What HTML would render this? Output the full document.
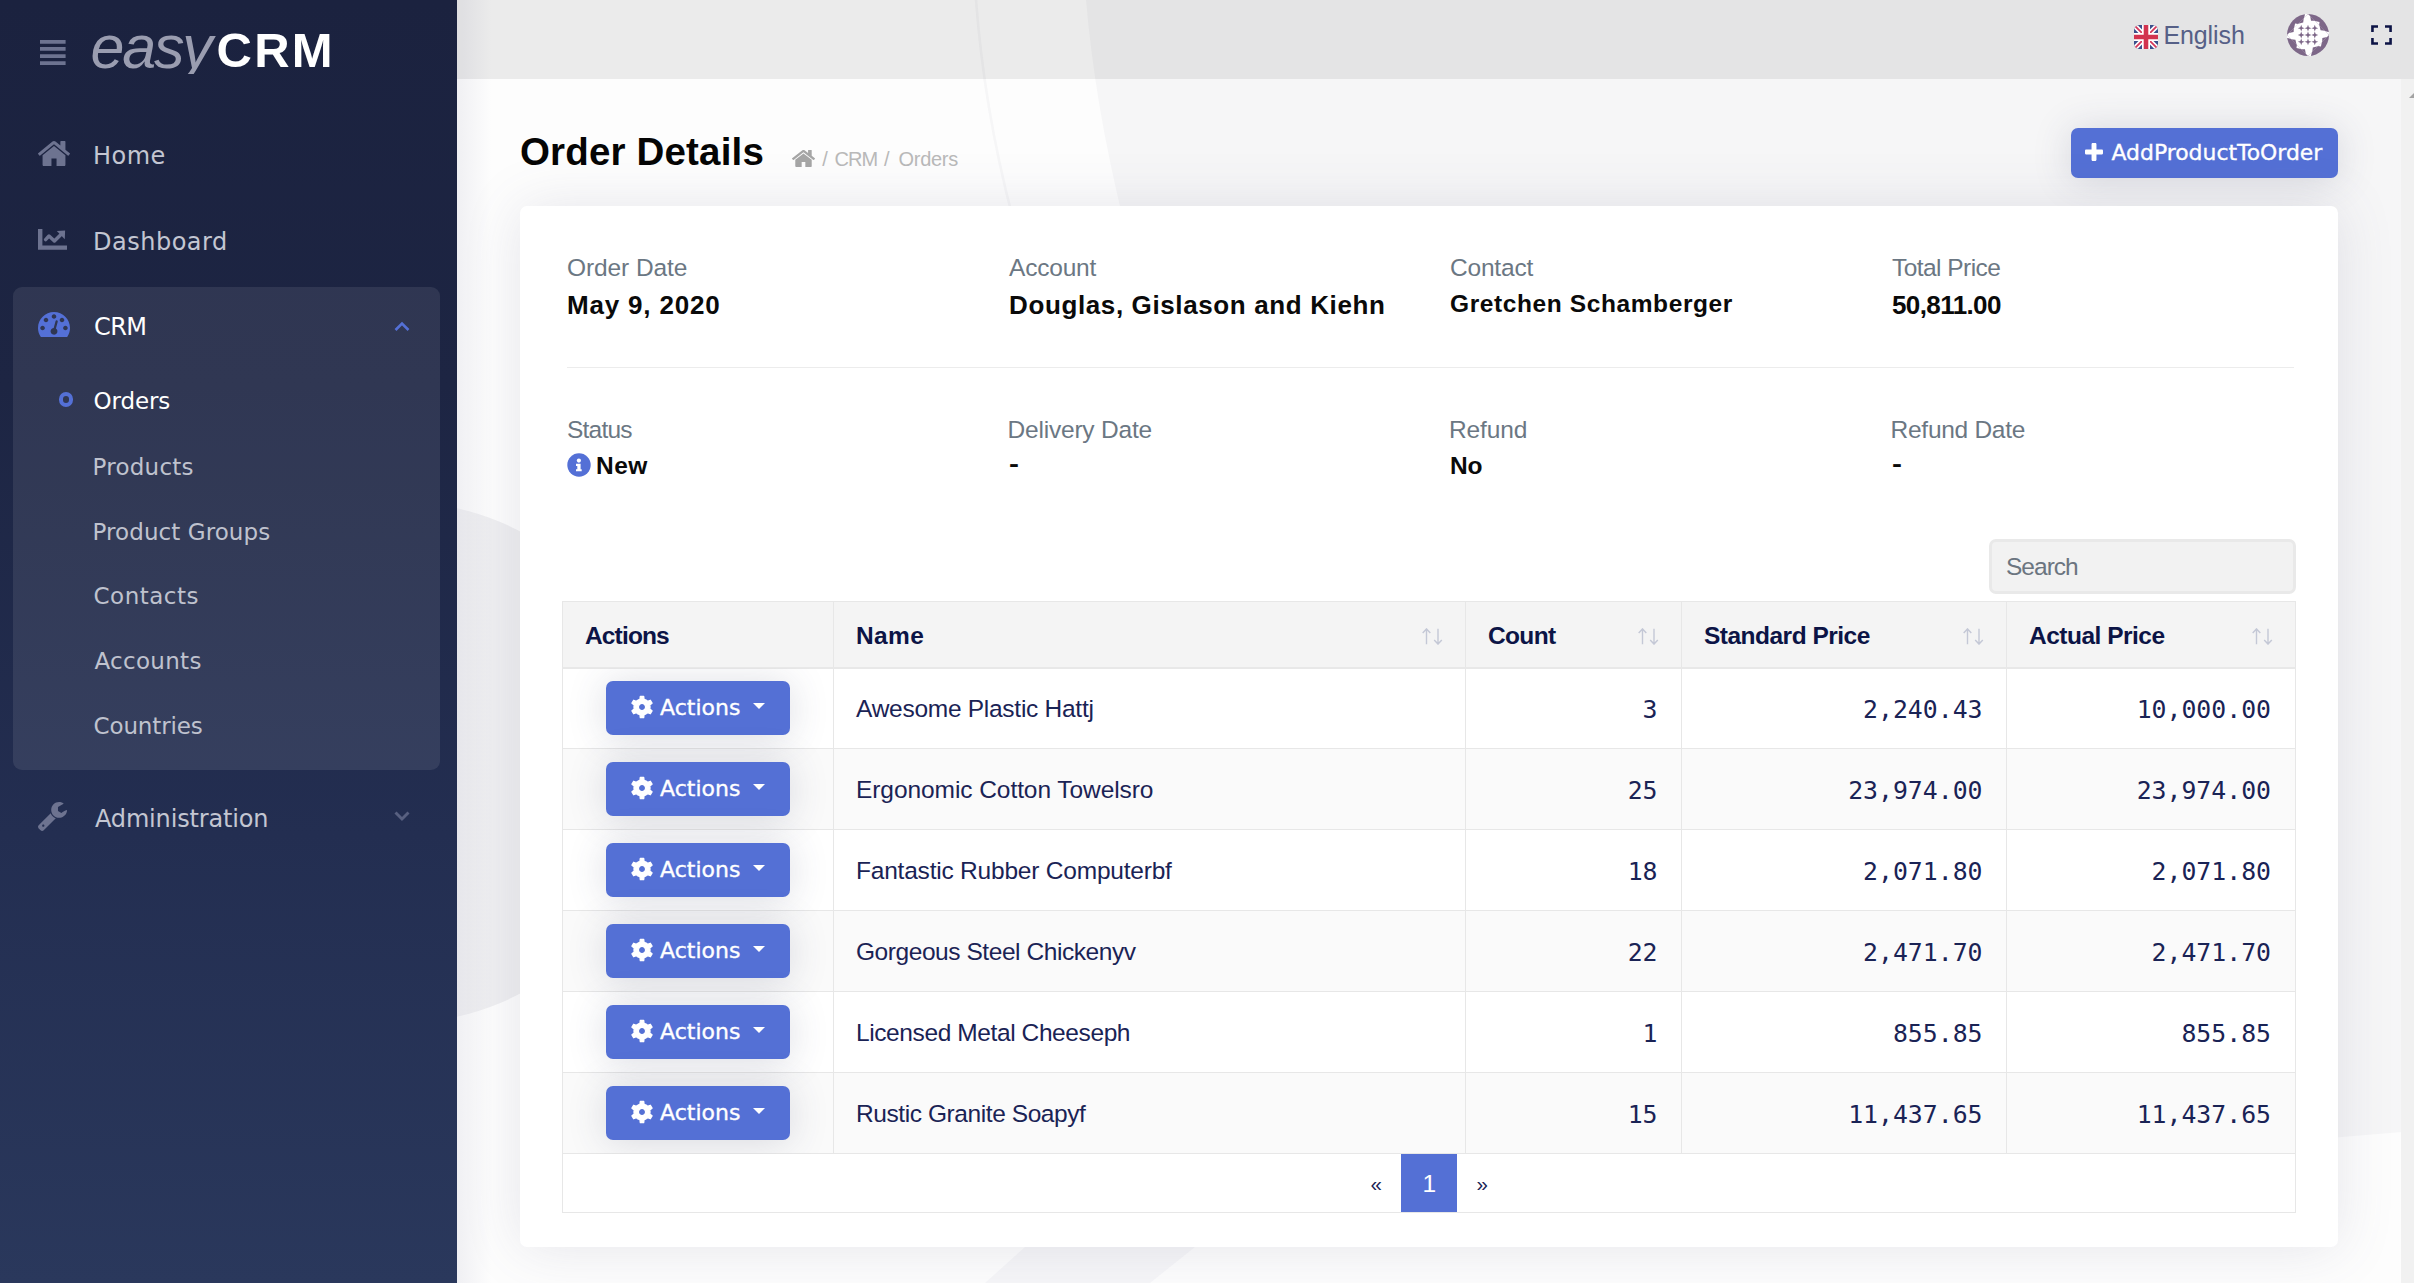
<!DOCTYPE html>
<html lang="en">
<head>
<meta charset="utf-8">
<title>Order Details - easyCRM</title>
<style>
*{box-sizing:border-box;margin:0;padding:0}
html,body{width:2414px;height:1283px;overflow:hidden}
body{position:relative;background:#f7f7f8;font-family:"Liberation Sans","DejaVu Sans",sans-serif;color:#000}
.abs{position:absolute;white-space:nowrap}
/* ---------- background ---------- */
#bg{position:absolute;left:457px;top:0;width:1957px;height:1283px;overflow:hidden;background:#fdfdfd}
#bg svg{position:absolute;left:0;top:0}
#bg .edge{position:absolute;left:0;top:0;width:34px;height:1283px;background:linear-gradient(90deg,rgba(214,214,224,.34),rgba(230,230,238,0))}
/* ---------- sidebar ---------- */
#side{position:absolute;left:0;top:0;width:457px;height:1283px;background:linear-gradient(180deg,#1b223f 0,#1d2543 30%,#232e51 65%,#2a385c 100%);color:#c6c8d3}
#side .t{position:absolute;white-space:nowrap;font-family:"DejaVu Sans","Liberation Sans",sans-serif;font-size:24px;line-height:30px;color:#c3c6d2}
#side .sub{color:#bfc2ce;font-size:23px}
#crmbox{position:absolute;left:13px;top:287px;width:427px;height:483px;border-radius:9px;background:rgba(255,255,255,.085)}
/* ---------- topbar ---------- */
#top{position:absolute;left:457px;top:0;width:1957px;height:79px;background:rgba(0,0,0,.071)}
#scroll{position:absolute;left:2401px;top:79px;width:13px;height:1204px;background:#f1f1f1;overflow:hidden}
/* ---------- page ---------- */
#card{position:absolute;left:520px;top:206px;width:1818px;height:1041px;background:#fff;border-radius:7px;box-shadow:0 1px 56px rgba(90,90,125,.145)}
.lbl{position:absolute;white-space:nowrap;font-size:24.5px;line-height:30px;color:#6b7783}
.val{position:absolute;white-space:nowrap;font-size:26px;line-height:32px;font-weight:bold;color:#0a0a0a}
.btn{position:absolute;background:#5470d5;color:#fff;border-radius:7px;box-shadow:0 2px 38px rgba(60,65,100,.18)}
/* ---------- table ---------- */
#tbl{position:absolute;left:562px;top:601px;width:1732.5px;border-collapse:collapse;table-layout:fixed;font-size:24.5px;color:#1a2355}
#tbl th,#tbl td{border:1.5px solid #e7e7e7;padding:0 22px;height:81px;vertical-align:middle;position:relative;white-space:nowrap}
#tbl th{height:66px;padding-top:3.4px;background:#f4f4f4;text-align:left;font-weight:bold;color:#0c1446;border-bottom:2.5px solid #e8e8e8}
#tbl tr.even td{background:#fafafa}
#tbl td.nm{padding-top:1.6px}
#tbl td.num{text-align:right;padding-right:23.5px;padding-top:2px;font-family:"DejaVu Sans Mono","Liberation Mono",monospace;font-size:24.8px}
#tbl td.pg{height:58.5px;text-align:center}
#acts{position:absolute;left:0;top:0;width:2414px;height:1283px;clip-path:inset(668.5px 1400px 129.6px 563px)}
.bc{font-size:20px;line-height:28px;color:#b9b9b9}
.ab{font-family:"DejaVu Sans","Liberation Sans",sans-serif;font-size:22px;line-height:30px;color:#fff;-webkit-text-stroke:.35px #fff}
.sort{position:absolute;right:22px;top:25.500px}
</style>
</head>
<body>
<div id="bg"><svg width="1957" height="1283" viewBox="457 0 1957 1283"><path fill="#f6f6f7" d="M1086 0C1092 70 1104 140 1122 215L2330 215L2330 1138L2414 1131L2414 0z"/><path fill="#f9f9fa" d="M2330 1138L2414 1131V1283H2330z" opacity="0"/><circle cx="400" cy="762.5" r="260.5" fill="#efeff1"/><path fill="none" stroke="#ececee" stroke-width="2.500" opacity=".4" d="M976 0C982 80 995 150 1012 215"/><path fill="#f6f6f8" d="M985 1283L1025 1247H1195L1150 1283z"/></svg><div class="edge"></div></div>
<header id="top">
<svg class="abs" style="left:1677px;top:25px" width="24" height="24" viewBox="0 0 24 24"><defs><clipPath id="fc"><rect x="0" y="0" width="24" height="24" rx="5.5"/></clipPath></defs><g clip-path="url(#fc)"><rect width="24" height="24" fill="#3b4f8c"/><path d="M0 0L24 24M24 0L0 24" stroke="#fff" stroke-width="5"/><path d="M0 0L24 24M24 0L0 24" stroke="#d6385a" stroke-width="1.8"/><path d="M12 0V24M0 12H24" stroke="#fff" stroke-width="8"/><path d="M12 0V24M0 12H24" stroke="#d2334f" stroke-width="4.6"/></g></svg>
<div class="abs" id="t_eng" style="left:1706.4px;top:19px;font-size:25px;line-height:32px;color:#566087;letter-spacing:-0.1px">English</div>
<svg class="abs" style="left:1829px;top:13px" width="44" height="44" viewBox="-22 -22 44 44"><circle r="21" fill="#7d6788"/><g transform="rotate(45)"><path fill="#fff" d="M-14.850-14.850H14.850V14.850H-14.850z"/><g transform="rotate(0)"><path fill="#7d6788" d="M-12-15L-5-15-8-12.300zM1-15L9-15 5.500-12.300z"/><path fill="#fff" d="M-5-14.700L1-14.700-1-17.300zM9-14.700L14.500-14.700 13-17z"/></g><g transform="rotate(90)"><path fill="#7d6788" d="M-12-15L-5-15-8-12.300zM1-15L9-15 5.500-12.300z"/><path fill="#fff" d="M-5-14.700L1-14.700-1-17.300zM9-14.700L14.500-14.700 13-17z"/></g><g transform="rotate(180)"><path fill="#7d6788" d="M-12-15L-5-15-8-12.300zM1-15L9-15 5.500-12.300z"/><path fill="#fff" d="M-5-14.700L1-14.700-1-17.300zM9-14.700L14.500-14.700 13-17z"/></g><g transform="rotate(270)"><path fill="#7d6788" d="M-12-15L-5-15-8-12.300zM1-15L9-15 5.500-12.300z"/><path fill="#fff" d="M-5-14.700L1-14.700-1-17.300zM9-14.700L14.500-14.700 13-17z"/></g></g><path fill="#7d6788" d="M-6.80 -10.20L-5.92 -7.68L-3.40 -6.80L-5.92 -5.92L-6.80 -3.40L-7.68 -5.92L-10.20 -6.80L-7.68 -7.68zM-6.80 -3.40L-5.92 -0.88L-3.40 0.00L-5.92 0.88L-6.80 3.40L-7.68 0.88L-10.20 0.00L-7.68 -0.88zM-6.80 3.40L-5.92 5.92L-3.40 6.80L-5.92 7.68L-6.80 10.20L-7.68 7.68L-10.20 6.80L-7.68 5.92zM0.00 -10.20L0.88 -7.68L3.40 -6.80L0.88 -5.92L0.00 -3.40L-0.88 -5.92L-3.40 -6.80L-0.88 -7.68zM0.00 -3.40L0.88 -0.88L3.40 0.00L0.88 0.88L0.00 3.40L-0.88 0.88L-3.40 0.00L-0.88 -0.88zM0.00 3.40L0.88 5.92L3.40 6.80L0.88 7.68L0.00 10.20L-0.88 7.68L-3.40 6.80L-0.88 5.92zM6.80 -10.20L7.68 -7.68L10.20 -6.80L7.68 -5.92L6.80 -3.40L5.92 -5.92L3.40 -6.80L5.92 -7.68zM6.80 -3.40L7.68 -0.88L10.20 0.00L7.68 0.88L6.80 3.40L5.92 0.88L3.40 0.00L5.92 -0.88zM6.80 3.40L7.68 5.92L10.20 6.80L7.68 7.68L6.80 10.20L5.92 7.68L3.40 6.80L5.92 5.92z"/></svg>
<svg class="abs" style="left:1914px;top:24.500px" width="21" height="20" viewBox="0 0 21 20"><path fill="none" stroke="#0c1345" stroke-width="2.600" d="M1.450 7V1.450H7M14 1.450h5.550V7M19.550 13v5.550H14M7 18.550H1.450V13"/></svg>
</header>
<div id="scroll"><div style="position:absolute;left:7.500px;top:12.500px;width:0;height:0;border-left:6px solid transparent;border-right:6px solid transparent;border-bottom:6px solid #a3a3a3"></div></div>
<nav id="side"><div id="crmbox"></div>
<svg class="abs" style="left:40px;top:40px" width="26" height="25" viewBox="0 0 26 25"><path fill="#6d7390" d="M0 0h25.6v3.7H0zM0 7.1h25.6v3.7H0zM0 14.2h25.6v3.7H0zM0 21.3h25.6v3.7H0z"/></svg>
<div class="abs" id="logo1" style="left:90.5px;top:12px;font-size:61px;line-height:70px;font-style:italic;color:#9a9db0;letter-spacing:-2.2px;height:62px;overflow:hidden;padding-right:8px">easy</div>
<div class="abs" id="logo2" style="left:216.5px;top:21px;font-size:49px;line-height:58px;font-weight:bold;color:#fff;letter-spacing:2.3px">CRM</div>
<svg class="abs" style="left:38px;top:141px" width="32" height="25" viewBox="25.9 -1283.2 1612.3 1283.2" preserveAspectRatio="none"><path fill="#6d7390" transform="scale(1,-1)" d="M1408 544C1408 546 1408 548 1407 550L832 1024L257 550C257 548 256 546 256 544V64C256 29 285 0 320 0H704V384H960V0H1344C1379 0 1408 29 1408 64ZM1631 613C1642 626 1640 647 1627 658L1408 840V1248C1408 1266 1394 1280 1376 1280H1184C1166 1280 1152 1266 1152 1248V1053L908 1257C866 1292 798 1292 756 1257L37 658C24 647 22 626 33 613L95 539C100 533 108 529 116 528C125 527 133 530 140 535L832 1112L1524 535C1530 530 1537 528 1545 528C1546 528 1547 528 1548 528C1556 529 1564 533 1569 539L1631 613Z"/></svg>
<div class="t" id="s_home" style="left:93px;top:140.6px;letter-spacing:0.5px">Home</div>
<svg class="abs" style="left:38px;top:229px" width="30" height="21" viewBox="0 0 30 21"><path fill="#6d7390" d="M0 0h4.4v16.4h24.6v4.4H0z"/><path fill="none" stroke="#6d7390" stroke-width="3.5" stroke-linejoin="round" stroke-linecap="round" d="M7.6 10.6L11 7l5.4 5L23.5 5"/><path fill="#6d7390" d="M18.8 1.9l8.3-.5-.3 8.9z"/></svg>
<div class="t" id="s_dash" style="left:93px;top:226.6px;letter-spacing:0.5px">Dashboard</div>
<svg class="abs" style="left:38px;top:312px" width="32" height="25" viewBox="0.0 -1280.0 1792.0 1408.0" preserveAspectRatio="none"><path fill="#5470d6" transform="scale(1,-1)" d="M384 384C384 313 327 256 256 256C185 256 128 313 128 384C128 455 185 512 256 512C327 512 384 455 384 384ZM576 832C576 761 519 704 448 704C377 704 320 761 320 832C320 903 377 960 448 960C519 960 576 903 576 832ZM1004 351C1069 306 1103 224 1082 143C1055 41 950 -21 847 6C745 33 683 138 710 241C732 322 801 377 880 383L981 765C990 799 1025 820 1059 811C1093 802 1113 767 1105 733ZM1664 384C1664 313 1607 256 1536 256C1465 256 1408 313 1408 384C1408 455 1465 512 1536 512C1607 512 1664 455 1664 384ZM1024 1024C1024 953 967 896 896 896C825 896 768 953 768 1024C768 1095 825 1152 896 1152C967 1152 1024 1095 1024 1024ZM1472 832C1472 761 1415 704 1344 704C1273 704 1216 761 1216 832C1216 903 1273 960 1344 960C1415 960 1472 903 1472 832ZM1792 384C1792 878 1390 1280 896 1280C402 1280 0 878 0 384C0 212 49 45 141 -99C153 -117 173 -128 195 -128H1597C1619 -128 1639 -117 1651 -99C1743 46 1792 212 1792 384Z"/></svg>
<div class="t" id="s_crm" style="left:94px;top:311.8px;color:#fff;letter-spacing:-0.6px">CRM</div>
<svg class="abs" style="left:393px;top:319px" width="18" height="14" viewBox="0 0 18 14"><path d="M2.5 11 L9 4.5 L15.5 11" fill="none" stroke="#5470d6" stroke-width="2.6"/></svg>
<div class="abs" style="left:58.7px;top:392px;width:14.6px;height:14.6px;border:4.3px solid #5470d6;border-radius:50%"></div>
<div class="t" id="s_orders" style="left:93.5px;top:386px;color:#fff;font-size:23px;letter-spacing:-0.1px">Orders</div>
<div class="t sub" id="s_products" style="left:92.5px;top:451.6px;letter-spacing:0.25px">Products</div>
<div class="t sub" id="s_pgroups" style="left:92.5px;top:516.6px;letter-spacing:0.08px">Product Groups</div>
<div class="t sub" id="s_contacts" style="left:93.5px;top:580.6px;letter-spacing:0.5px">Contacts</div>
<div class="t sub" id="s_accounts" style="left:94.5px;top:645.6px;letter-spacing:0.29px">Accounts</div>
<div class="t sub" id="s_countries" style="left:93.5px;top:710.6px;letter-spacing:-0.12px">Countries</div>
<svg class="abs" style="left:38px;top:802px" width="29" height="29" viewBox="21.0 -1408.0 1641.0 1643.0" preserveAspectRatio="none"><path fill="#6d7390" transform="scale(1,-1)" d="M384 64C384 29 355 0 320 0C285 0 256 29 256 64C256 99 285 128 320 128C355 128 384 99 384 64ZM1028 484C897 536 792 641 740 772L59 91C35 67 21 34 21 0C21 -34 35 -67 59 -90L165 -198C189 -221 222 -235 256 -235C290 -235 323 -221 346 -198L1028 484ZM1662 919C1662 939 1650 954 1630 954C1610 954 1378 808 1345 789L1152 896V1120L1445 1289C1454 1295 1461 1306 1461 1317C1461 1329 1455 1338 1445 1345C1384 1386 1289 1408 1216 1408C969 1408 768 1207 768 960C768 713 969 512 1216 512C1405 512 1576 635 1639 813C1650 845 1662 886 1662 919Z"/></svg>
<div class="t" id="s_admin" style="left:95px;top:803.7px;letter-spacing:-0.17px">Administration</div>
<svg class="abs" style="left:393px;top:809px" width="18" height="14" viewBox="0 0 18 14"><path d="M2.5 3.5 L9 10 L15.5 3.5" fill="none" stroke="#586080" stroke-width="2.9"/></svg>
</nav>
<h1 class="abs" id="title" style="left:520px;top:128px;font-size:38.5px;line-height:48px;font-weight:bold;color:#050505;letter-spacing:0.17px">Order Details</h1>
<svg class="abs" style="left:792px;top:150px" width="23" height="17" viewBox="25.9 -1283.2 1612.3 1283.2" preserveAspectRatio="none"><path fill="#a6a6a6" transform="scale(1,-1)" d="M1408 544C1408 546 1408 548 1407 550L832 1024L257 550C257 548 256 546 256 544V64C256 29 285 0 320 0H704V384H960V0H1344C1379 0 1408 29 1408 64ZM1631 613C1642 626 1640 647 1627 658L1408 840V1248C1408 1266 1394 1280 1376 1280H1184C1166 1280 1152 1266 1152 1248V1053L908 1257C866 1292 798 1292 756 1257L37 658C24 647 22 626 33 613L95 539C100 533 108 529 116 528C125 527 133 530 140 535L832 1112L1524 535C1530 530 1537 528 1545 528C1546 528 1547 528 1548 528C1556 529 1564 533 1569 539L1631 613Z"/></svg>
<div class="abs bc" id="bc1" style="left:822.3px;top:145px">/</div><div class="abs bc" id="bc2" style="left:834.5px;top:145px;letter-spacing:-0.9px">CRM</div><div class="abs bc" id="bc3" style="left:884px;top:145px">/</div><div class="abs bc" id="bc4" style="left:898.5px;top:145px;letter-spacing:-0.28px">Orders</div>
<div class="btn" style="left:2071px;top:128px;width:267px;height:50px"></div>
<svg class="abs" style="left:2085px;top:143px" width="18" height="18" viewBox="0.0 -1408.0 1408.0 1408.0" preserveAspectRatio="none"><path fill="#fff" transform="scale(1,-1)" d="M1408 800C1408 853 1365 896 1312 896H896V1312C896 1365 853 1408 800 1408H608C555 1408 512 1365 512 1312V896H96C43 896 0 853 0 800V608C0 555 43 512 96 512H512V96C512 43 555 0 608 0H800C853 0 896 43 896 96V512H1312C1365 512 1408 555 1408 608Z"/></svg>
<div class="abs" id="addbtn" style="left:2111.5px;top:138px;font-family:'DejaVu Sans','Liberation Sans',sans-serif;font-size:21.9px;line-height:30px;color:#fff;-webkit-text-stroke:.35px #fff">AddProductToOrder</div>
<div id="card"></div>
<div class="lbl" id="l1" style="left:567px;top:253px;letter-spacing:-0.09px">Order Date</div>
<div class="val" id="v1" style="left:567px;top:289px;letter-spacing:0.82px">May 9, 2020</div>
<div class="lbl" id="l2" style="left:1009px;top:253px;letter-spacing:-0.2px">Account</div>
<div class="val" id="v2" style="left:1009px;top:289px;letter-spacing:0.62px">Douglas, Gislason and Kiehn</div>
<div class="lbl" id="l3" style="left:1450px;top:253px;letter-spacing:-0.2px">Contact</div>
<div class="val" id="v3" style="left:1450px;top:288px;font-size:24.5px;letter-spacing:0.6px">Gretchen Schamberger</div>
<div class="lbl" id="l4" style="left:1892px;top:253px;letter-spacing:-0.55px">Total Price</div>
<div class="val" id="v4" style="left:1892px;top:289px;letter-spacing:-0.6px">50,811.00</div>
<div class="abs" style="left:567px;top:366.500px;width:1727px;height:1.500px;background:#ececec"></div>
<div class="lbl" id="l5" style="left:567px;top:415px;letter-spacing:-0.78px">Status</div>
<svg class="abs" style="left:567.400px;top:452.900px" width="24" height="24" viewBox="-12 -12 24 24"><circle r="11.700" fill="#5470d6"/><circle cx="-.1" cy="-4.400" r="2.100" fill="#fff"/><path fill="#fff" d="M-3-1.200H1.600V4.200H2.700V6.300H-3V4.200H-1.700V1.100H-3z"/></svg>
<div class="val" id="v5" style="left:596px;top:450px;font-size:24.5px;letter-spacing:0.45px">New</div>
<div class="lbl" id="l6" style="left:1007.5px;top:415px;letter-spacing:-0.2px">Delivery Date</div>
<div class="val" id="v6" style="left:1009px;top:448px;font-size:24.5px;letter-spacing:0;transform:scaleX(1.22);transform-origin:left">-</div>
<div class="lbl" id="l7" style="left:1449px;top:415px;letter-spacing:-0.14px">Refund</div>
<div class="val" id="v7" style="left:1450px;top:450px;font-size:24.5px;letter-spacing:-0.2px">No</div>
<div class="lbl" id="l8" style="left:1890.6px;top:415px;letter-spacing:-0.28px">Refund Date</div>
<div class="val" id="v8" style="left:1892px;top:448px;font-size:24.5px;transform:scaleX(1.22);transform-origin:left">-</div>
<div class="abs" style="left:1989px;top:539px;width:307px;height:55px;border:3.500px solid #e9e9e9;border-radius:7px;background:#f2f2f2"></div>
<div class="abs" id="search" style="left:2006px;top:552px;font-size:24.500px;line-height:30px;color:#6b7580;letter-spacing:-0.98px">Search</div>
<table id="tbl"><colgroup><col style="width:271px"><col style="width:632px"><col style="width:216px"><col style="width:325px"><col style="width:288.5px"></colgroup>
<thead><tr><th><span id="h1" style="letter-spacing:-0.85px">Actions</span></th><th><span id="h2" style="letter-spacing:0.4px">Name</span><svg class="sort" width="21" height="17" viewBox="0 0 21 17"><path fill="none" stroke="#c4c8d6" stroke-width="1.400" d="M4.500 16.300V.9M.700 5L4.500 .9l3.800 4.100M16 .7v15.400M12.200 12L16 16.100l3.800-4.100"/></svg></th><th><span id="h3" style="letter-spacing:-0.65px">Count</span><svg class="sort" width="21" height="17" viewBox="0 0 21 17"><path fill="none" stroke="#c4c8d6" stroke-width="1.400" d="M4.500 16.300V.9M.700 5L4.500 .9l3.800 4.100M16 .7v15.400M12.200 12L16 16.100l3.800-4.100"/></svg></th><th><span id="h4" style="letter-spacing:-0.51px">Standard Price</span><svg class="sort" width="21" height="17" viewBox="0 0 21 17"><path fill="none" stroke="#c4c8d6" stroke-width="1.400" d="M4.500 16.300V.9M.700 5L4.500 .9l3.800 4.100M16 .7v15.400M12.200 12L16 16.100l3.800-4.100"/></svg></th><th><span id="h5" style="letter-spacing:-0.5px">Actual Price</span><svg class="sort" width="21" height="17" viewBox="0 0 21 17"><path fill="none" stroke="#c4c8d6" stroke-width="1.400" d="M4.500 16.300V.9M.700 5L4.500 .9l3.800 4.100M16 .7v15.400M12.200 12L16 16.100l3.800-4.100"/></svg></th></tr></thead>
<tbody>
<tr><td></td><td class="nm"><span id="n0" style="letter-spacing:-0.27px">Awesome Plastic Hattj</span></td><td class="num"><span id="c0">3</span></td><td class="num"><span id="s0">2,240.43</span></td><td class="num"><span id="a0">10,000.00</span></td></tr>
<tr class="even"><td></td><td class="nm"><span id="n1" style="letter-spacing:-0.07px">Ergonomic Cotton Towelsro</span></td><td class="num"><span id="c1">25</span></td><td class="num"><span id="s1">23,974.00</span></td><td class="num"><span id="a1">23,974.00</span></td></tr>
<tr><td></td><td class="nm"><span id="n2" style="letter-spacing:-0.21px">Fantastic Rubber Computerbf</span></td><td class="num"><span id="c2">18</span></td><td class="num"><span id="s2">2,071.80</span></td><td class="num"><span id="a2">2,071.80</span></td></tr>
<tr class="even"><td></td><td class="nm"><span id="n3" style="letter-spacing:-0.44px">Gorgeous Steel Chickenyv</span></td><td class="num"><span id="c3">22</span></td><td class="num"><span id="s3">2,471.70</span></td><td class="num"><span id="a3">2,471.70</span></td></tr>
<tr><td></td><td class="nm"><span id="n4" style="letter-spacing:-0.4px">Licensed Metal Cheeseph</span></td><td class="num"><span id="c4">1</span></td><td class="num"><span id="s4">855.85</span></td><td class="num"><span id="a4">855.85</span></td></tr>
<tr class="even"><td></td><td class="nm"><span id="n5" style="letter-spacing:-0.42px">Rustic Granite Soapyf</span></td><td class="num"><span id="c5">15</span></td><td class="num"><span id="s5">11,437.65</span></td><td class="num"><span id="a5">11,437.65</span></td></tr>
<tr><td class="pg" colspan="5"></td></tr>
</tbody></table>
<div id="acts">
<div class="btn" style="left:606px;top:681px;width:184px;height:54px"></div>
<svg class="abs" style="left:629.5px;top:695px" width="24" height="24" viewBox="-12 -12 24 24"><path fill="#fff" fill-rule="evenodd" stroke="#fff" stroke-width="1.3" stroke-linejoin="round" d="M-2.07 -7.73L-1.68 -10.62L1.68 -10.62L2.07 -7.73L3.37 -7.26L4.57 -6.57L5.66 -5.66L8.35 -6.77L10.04 -3.85L7.73 -2.07L7.97 -0.71L7.97 0.67L7.73 2.07L10.04 3.85L8.35 6.77L5.66 5.66L4.60 6.55L3.41 7.24L2.07 7.73L1.68 10.62L-1.68 10.62L-2.07 7.73L-3.37 7.26L-4.57 6.57L-5.66 5.66L-8.35 6.77L-10.04 3.85L-7.73 2.07L-7.97 0.71L-7.97 -0.67L-7.73 -2.07L-10.04 -3.85L-8.35 -6.77L-5.66 -5.66L-4.60 -6.55L-3.41 -7.24zM3.60 0A3.60 3.60 0 1 0 -3.60 0A3.60 3.60 0 1 0 3.60 0z"/></svg>
<div class="abs ab" id="b0" style="left:660px;top:693.2px">Actions</div>
<div class="abs" style="left:752.500px;top:703px;width:0;height:0;border-left:6px solid transparent;border-right:6px solid transparent;border-top:6.500px solid #fff"></div>
<div class="btn" style="left:606px;top:762px;width:184px;height:54px"></div>
<svg class="abs" style="left:629.5px;top:776px" width="24" height="24" viewBox="-12 -12 24 24"><path fill="#fff" fill-rule="evenodd" stroke="#fff" stroke-width="1.3" stroke-linejoin="round" d="M-2.07 -7.73L-1.68 -10.62L1.68 -10.62L2.07 -7.73L3.37 -7.26L4.57 -6.57L5.66 -5.66L8.35 -6.77L10.04 -3.85L7.73 -2.07L7.97 -0.71L7.97 0.67L7.73 2.07L10.04 3.85L8.35 6.77L5.66 5.66L4.60 6.55L3.41 7.24L2.07 7.73L1.68 10.62L-1.68 10.62L-2.07 7.73L-3.37 7.26L-4.57 6.57L-5.66 5.66L-8.35 6.77L-10.04 3.85L-7.73 2.07L-7.97 0.71L-7.97 -0.67L-7.73 -2.07L-10.04 -3.85L-8.35 -6.77L-5.66 -5.66L-4.60 -6.55L-3.41 -7.24zM3.60 0A3.60 3.60 0 1 0 -3.60 0A3.60 3.60 0 1 0 3.60 0z"/></svg>
<div class="abs ab" id="b1" style="left:660px;top:774.2px">Actions</div>
<div class="abs" style="left:752.500px;top:784px;width:0;height:0;border-left:6px solid transparent;border-right:6px solid transparent;border-top:6.500px solid #fff"></div>
<div class="btn" style="left:606px;top:843px;width:184px;height:54px"></div>
<svg class="abs" style="left:629.5px;top:857px" width="24" height="24" viewBox="-12 -12 24 24"><path fill="#fff" fill-rule="evenodd" stroke="#fff" stroke-width="1.3" stroke-linejoin="round" d="M-2.07 -7.73L-1.68 -10.62L1.68 -10.62L2.07 -7.73L3.37 -7.26L4.57 -6.57L5.66 -5.66L8.35 -6.77L10.04 -3.85L7.73 -2.07L7.97 -0.71L7.97 0.67L7.73 2.07L10.04 3.85L8.35 6.77L5.66 5.66L4.60 6.55L3.41 7.24L2.07 7.73L1.68 10.62L-1.68 10.62L-2.07 7.73L-3.37 7.26L-4.57 6.57L-5.66 5.66L-8.35 6.77L-10.04 3.85L-7.73 2.07L-7.97 0.71L-7.97 -0.67L-7.73 -2.07L-10.04 -3.85L-8.35 -6.77L-5.66 -5.66L-4.60 -6.55L-3.41 -7.24zM3.60 0A3.60 3.60 0 1 0 -3.60 0A3.60 3.60 0 1 0 3.60 0z"/></svg>
<div class="abs ab" id="b2" style="left:660px;top:855.2px">Actions</div>
<div class="abs" style="left:752.500px;top:865px;width:0;height:0;border-left:6px solid transparent;border-right:6px solid transparent;border-top:6.500px solid #fff"></div>
<div class="btn" style="left:606px;top:924px;width:184px;height:54px"></div>
<svg class="abs" style="left:629.5px;top:938px" width="24" height="24" viewBox="-12 -12 24 24"><path fill="#fff" fill-rule="evenodd" stroke="#fff" stroke-width="1.3" stroke-linejoin="round" d="M-2.07 -7.73L-1.68 -10.62L1.68 -10.62L2.07 -7.73L3.37 -7.26L4.57 -6.57L5.66 -5.66L8.35 -6.77L10.04 -3.85L7.73 -2.07L7.97 -0.71L7.97 0.67L7.73 2.07L10.04 3.85L8.35 6.77L5.66 5.66L4.60 6.55L3.41 7.24L2.07 7.73L1.68 10.62L-1.68 10.62L-2.07 7.73L-3.37 7.26L-4.57 6.57L-5.66 5.66L-8.35 6.77L-10.04 3.85L-7.73 2.07L-7.97 0.71L-7.97 -0.67L-7.73 -2.07L-10.04 -3.85L-8.35 -6.77L-5.66 -5.66L-4.60 -6.55L-3.41 -7.24zM3.60 0A3.60 3.60 0 1 0 -3.60 0A3.60 3.60 0 1 0 3.60 0z"/></svg>
<div class="abs ab" id="b3" style="left:660px;top:936.2px">Actions</div>
<div class="abs" style="left:752.500px;top:946px;width:0;height:0;border-left:6px solid transparent;border-right:6px solid transparent;border-top:6.500px solid #fff"></div>
<div class="btn" style="left:606px;top:1005px;width:184px;height:54px"></div>
<svg class="abs" style="left:629.5px;top:1019px" width="24" height="24" viewBox="-12 -12 24 24"><path fill="#fff" fill-rule="evenodd" stroke="#fff" stroke-width="1.3" stroke-linejoin="round" d="M-2.07 -7.73L-1.68 -10.62L1.68 -10.62L2.07 -7.73L3.37 -7.26L4.57 -6.57L5.66 -5.66L8.35 -6.77L10.04 -3.85L7.73 -2.07L7.97 -0.71L7.97 0.67L7.73 2.07L10.04 3.85L8.35 6.77L5.66 5.66L4.60 6.55L3.41 7.24L2.07 7.73L1.68 10.62L-1.68 10.62L-2.07 7.73L-3.37 7.26L-4.57 6.57L-5.66 5.66L-8.35 6.77L-10.04 3.85L-7.73 2.07L-7.97 0.71L-7.97 -0.67L-7.73 -2.07L-10.04 -3.85L-8.35 -6.77L-5.66 -5.66L-4.60 -6.55L-3.41 -7.24zM3.60 0A3.60 3.60 0 1 0 -3.60 0A3.60 3.60 0 1 0 3.60 0z"/></svg>
<div class="abs ab" id="b4" style="left:660px;top:1017.2px">Actions</div>
<div class="abs" style="left:752.500px;top:1027px;width:0;height:0;border-left:6px solid transparent;border-right:6px solid transparent;border-top:6.500px solid #fff"></div>
<div class="btn" style="left:606px;top:1086px;width:184px;height:54px"></div>
<svg class="abs" style="left:629.5px;top:1100px" width="24" height="24" viewBox="-12 -12 24 24"><path fill="#fff" fill-rule="evenodd" stroke="#fff" stroke-width="1.3" stroke-linejoin="round" d="M-2.07 -7.73L-1.68 -10.62L1.68 -10.62L2.07 -7.73L3.37 -7.26L4.57 -6.57L5.66 -5.66L8.35 -6.77L10.04 -3.85L7.73 -2.07L7.97 -0.71L7.97 0.67L7.73 2.07L10.04 3.85L8.35 6.77L5.66 5.66L4.60 6.55L3.41 7.24L2.07 7.73L1.68 10.62L-1.68 10.62L-2.07 7.73L-3.37 7.26L-4.57 6.57L-5.66 5.66L-8.35 6.77L-10.04 3.85L-7.73 2.07L-7.97 0.71L-7.97 -0.67L-7.73 -2.07L-10.04 -3.85L-8.35 -6.77L-5.66 -5.66L-4.60 -6.55L-3.41 -7.24zM3.60 0A3.60 3.60 0 1 0 -3.60 0A3.60 3.60 0 1 0 3.60 0z"/></svg>
<div class="abs ab" id="b5" style="left:660px;top:1098.2px">Actions</div>
<div class="abs" style="left:752.500px;top:1108px;width:0;height:0;border-left:6px solid transparent;border-right:6px solid transparent;border-top:6.500px solid #fff"></div>
</div>
<div class="abs" id="pg1" style="left:1370.5px;top:1168.5px;font-size:20.5px;line-height:30px;color:#1a2355">&laquo;</div>
<div class="abs" style="left:1401px;top:1154px;width:56px;height:58px;background:#5470d5"></div>
<div class="abs" id="pg2" style="left:1422.5px;top:1169px;font-size:24.500px;line-height:30px;color:#fff">1</div>
<div class="abs" id="pg3" style="left:1476.5px;top:1168.5px;font-size:20.5px;line-height:30px;color:#1a2355">&raquo;</div>
</body>
</html>
